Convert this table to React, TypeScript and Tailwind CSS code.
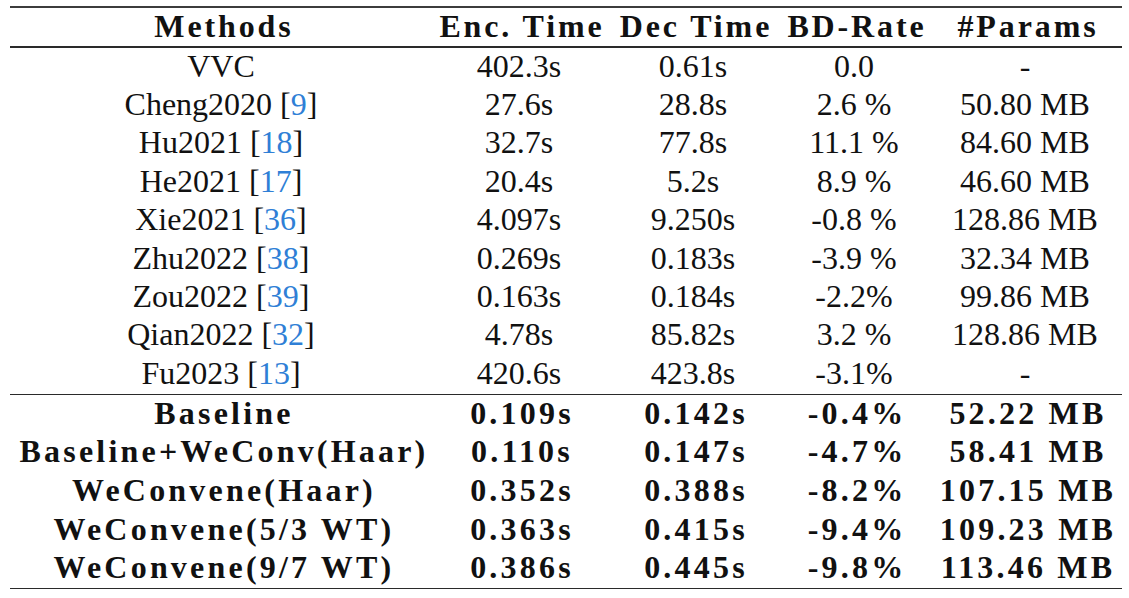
import React from 'react';

interface Row {
  method: string;
  cite?: string;
  enc: string;
  dec: string;
  bd: string;
  params: string;
}

const prior: Row[] = [
  { method: 'VVC', enc: '402.3s', dec: '0.61s', bd: '0.0', params: '-' },
  { method: 'Cheng2020', cite: '9', enc: '27.6s', dec: '28.8s', bd: '2.6 %', params: '50.80 MB' },
  { method: 'Hu2021', cite: '18', enc: '32.7s', dec: '77.8s', bd: '11.1 %', params: '84.60 MB' },
  { method: 'He2021', cite: '17', enc: '20.4s', dec: '5.2s', bd: '8.9 %', params: '46.60 MB' },
  { method: 'Xie2021', cite: '36', enc: '4.097s', dec: '9.250s', bd: '-0.8 %', params: '128.86 MB' },
  { method: 'Zhu2022', cite: '38', enc: '0.269s', dec: '0.183s', bd: '-3.9 %', params: '32.34 MB' },
  { method: 'Zou2022', cite: '39', enc: '0.163s', dec: '0.184s', bd: '-2.2%', params: '99.86 MB' },
  { method: 'Qian2022', cite: '32', enc: '4.78s', dec: '85.82s', bd: '3.2 %', params: '128.86 MB' },
  { method: 'Fu2023', cite: '13', enc: '420.6s', dec: '423.8s', bd: '-3.1%', params: '-' },
];

const ours: Row[] = [
  { method: 'Baseline', enc: '0.109s', dec: '0.142s', bd: '-0.4%', params: '52.22 MB' },
  { method: 'Baseline+WeConv(Haar)', enc: '0.110s', dec: '0.147s', bd: '-4.7%', params: '58.41 MB' },
  { method: 'WeConvene(Haar)', enc: '0.352s', dec: '0.388s', bd: '-8.2%', params: '107.15 MB' },
  { method: 'WeConvene(5/3 WT)', enc: '0.363s', dec: '0.415s', bd: '-9.4%', params: '109.23 MB' },
  { method: 'WeConvene(9/7 WT)', enc: '0.386s', dec: '0.445s', bd: '-9.8%', params: '113.46 MB' },
];

// column widths so the centres line up with the reference
const cols = 'grid grid-cols-[422px_174px_174px_148px_194px]';

function DataRow({ row, bold, h }: { row: Row; bold?: boolean; h: string }) {
  const weight = bold ? 'font-bold tracking-[0.1em] pl-[3px]' : '';
  return (
    <div className={`${cols} ${h} pb-[3px] items-center text-center whitespace-nowrap ${weight}`}>
      <div>
        {row.method}
        {row.cite && (
          <>
            {' '}[<span className="text-[#2f7fd6]">{row.cite}</span>]
          </>
        )}
      </div>
      <div>{row.enc}</div>
      <div>{row.dec}</div>
      <div>{row.bd}</div>
      <div>{row.params}</div>
    </div>
  );
}

export default function App() {
  return (
    <div className="w-[1129px] h-[598px] bg-white text-[#111] text-[32px] leading-none font-[family-name:'Liberation_Serif',serif] pl-[10px] pt-[6px]">
      <div className="w-[1112px]">
        <div className="h-[2px] bg-[#3c3c3c]" />
        <div className={`${cols} h-[38px] pb-[2px] pl-[3px] items-center text-center whitespace-nowrap font-bold tracking-[0.09em]`}>
          <div>Methods</div>
          <div>Enc. Time</div>
          <div>Dec Time</div>
          <div>BD-Rate</div>
          <div>#Params</div>
        </div>
        <div className="h-[2px] bg-[#2a2a2a]" />
        {prior.map((r) => (
          <DataRow key={r.method} row={r} h="h-[38.4px]" />
        ))}
        <div className="h-[1.5px] bg-[#2a2a2a]" />
        {ours.map((r) => (
          <DataRow key={r.method} row={r} bold h="h-[38.6px]" />
        ))}
        <div className="h-[1.5px] bg-[#2a2a2a]" />
      </div>
    </div>
  );
}
